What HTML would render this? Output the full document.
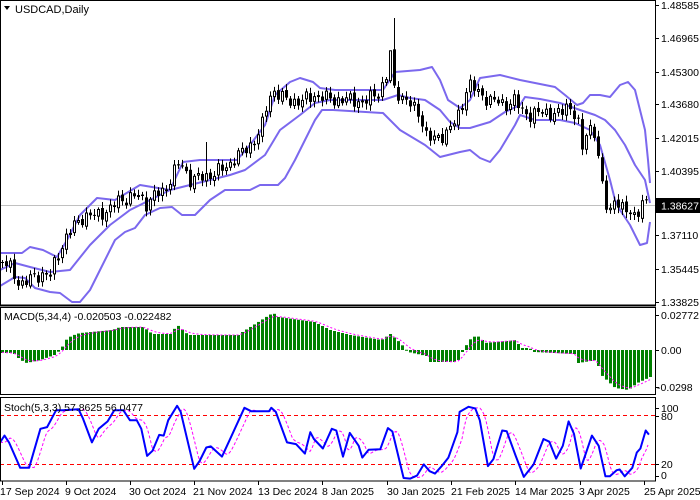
<!DOCTYPE html>
<html><head><meta charset="utf-8"><style>
html,body{margin:0;padding:0;background:#fff;}
svg{display:block;font-family:"Liberation Sans",sans-serif;}
</style></head><body>
<svg id="s" width="700" height="500" xmlns="http://www.w3.org/2000/svg">
<rect width="700" height="500" fill="#fff"/>
<line x1="0" y1="205.5" x2="655" y2="205.5" stroke="#c0c0c0"/>
<g id="bands" fill="none" stroke="#7b68ee" stroke-width="2" stroke-linejoin="round"></g>
<g id="candles"></g>
<g id="macd"></g>
<g id="stoch"></g>
<rect x="0.5" y="0.5" width="655" height="304.5" fill="none" stroke="#000"/>
<rect x="0.5" y="307.5" width="655" height="87" fill="none" stroke="#000"/>
<rect x="0.5" y="397.5" width="655" height="83.5" fill="none" stroke="#000"/>
<line x1="0" y1="306" x2="656" y2="306" stroke="#000"/>
<polygon points="4,6 10,6 7,10" fill="#000"/>
<text x="15" y="13" font-size="11" fill="#000">USDCAD,Daily</text>
<text x="4" y="320" font-size="10.5" fill="#000">MACD(5,34,4) -0.020503 -0.022482</text>
<text x="4" y="411" font-size="10.5" fill="#000">Stoch(5,3,3) 57.8625 56.0477</text>
<g font-size="10.5" fill="#000" id="axis">
<text x="661" y="9">1.48585</text>
<text x="661" y="42">1.46965</text>
<text x="661" y="76">1.45300</text>
<text x="661" y="108">1.43680</text>
<text x="661" y="142">1.42015</text>
<text x="661" y="175">1.40395</text>
<text x="661" y="239">1.37110</text>
<text x="661" y="273">1.35445</text>
<text x="661" y="306">1.33825</text>
<text x="661" y="319">0.02772</text>
<text x="661" y="354">0.00</text>
<text x="657" y="391">-0.0298</text>
<text x="661" y="412">100</text>
<text x="661" y="420">80</text>
<text x="661" y="468">20</text>
<text x="661" y="479">0</text>
</g>
<rect x="656" y="198" width="44" height="15" fill="#000"/>
<text x="661" y="209.5" font-size="10.5" fill="#fff">1.38627</text>
<g font-size="10.5" fill="#000">
<text x="0" y="495">17 Sep 2024</text>
<text x="65" y="495">9 Oct 2024</text>
<text x="129" y="495">30 Oct 2024</text>
<text x="193" y="495">21 Nov 2024</text>
<text x="258" y="495">13 Dec 2024</text>
<text x="322" y="495">8 Jan 2025</text>
<text x="387" y="495">30 Jan 2025</text>
<text x="451" y="495">21 Feb 2025</text>
<text x="515" y="495">14 Mar 2025</text>
<text x="579" y="495">3 Apr 2025</text>
<text x="644" y="495">25 Apr 2025</text>
</g>
</svg>
<script>
var NS="http://www.w3.org/2000/svg";
function el(p,t,a){var e=document.createElementNS(NS,t);for(var k in a)e.setAttribute(k,a[k]);p.appendChild(e);return e;}
function interp(K,x){if(x<=K[0][0])return K[0][1];for(var i=1;i<K.length;i++){if(x<=K[i][0]){var a=K[i-1],b=K[i];return a[1]+(b[1]-a[1])*(x-a[0])/(b[0]-a[0]);}}return K[K.length-1][1];}
function pts(K){return K.map(function(p){return p[0]+","+p[1];}).join(" ");}
var bands=document.getElementById("bands");
var U=[[0,253],[22,253],[30,247],[43,250],[57,257],[67,240],[80,215],[97,198],[115,200],[140,185],[170,190],[183,162],[200,160],[237,160],[250,145],[265,125],[275,95],[290,82],[300,78],[313,82],[320,88],[335,90],[383,90],[395,72],[420,70],[432,67],[440,80],[448,100],[460,108],[470,100],[480,78],[500,75],[520,80],[540,84],[555,87],[565,95],[577,105],[583,103],[590,95],[600,95],[610,97],[620,85],[628,82],[635,90],[640,110],[645,130],[648,160],[650,183]];
var M=[[0,270],[15,263],[30,267],[50,272],[70,270],[90,245],[110,225],[130,210],[150,200],[170,190],[190,185],[210,180],[230,175],[245,170],[265,155],[280,130],[300,115],[315,103],[330,100],[383,100],[398,95],[410,98],[425,100],[440,110],[450,122],[460,128],[470,128],[490,122],[505,112],[520,105],[525,97],[540,99],[560,103],[580,110],[595,115],[605,120],[615,130],[625,145],[635,165],[645,180],[650,203]];
var L=[[0,286],[15,277],[25,278],[35,288],[50,292],[60,293],[72,302],[80,302],[90,290],[100,270],[115,240],[125,232],[135,228],[145,215],[160,208],[172,207],[182,215],[195,215],[210,200],[225,190],[250,190],[260,185],[278,185],[285,178],[295,160],[305,140],[315,120],[322,110],[333,110],[383,113],[400,130],[425,145],[440,157],[460,152],[470,150],[480,158],[490,162],[500,150],[515,125],[520,115],[535,120],[560,120],[575,123],[590,130],[600,145],[610,180],[615,200],[620,210],[630,225],[640,245],[647,243],[650,222]];
[U,M,L].forEach(function(K){el(bands,"polyline",{points:pts(K)});});
var K=[[2,262],[10,268],[20,285],[27,282],[35,275],[50,275],[57,255],[65,240],[72,228],[80,218],[95,215],[110,210],[118,200],[130,198],[140,195],[145,205],[155,195],[165,190],[172,175],[180,162],[190,180],[200,178],[210,175],[225,168],[235,158],[245,150],[255,140],[262,125],[268,100],[272,90],[285,100],[300,102],[315,95],[325,98],[335,100],[350,100],[365,102],[380,90],[387,75],[392,40],[394,90],[400,95],[410,105],[420,115],[427,138],[435,140],[445,133],[453,125],[460,112],[465,90],[470,85],[480,95],[490,100],[505,105],[515,100],[520,110],[530,115],[545,112],[560,115],[567,105],[572,108],[578,125],[582,150],[587,130],[593,125],[597,150],[600,175],[605,205],[610,210],[615,195],[620,210],[630,212],[636,215],[641,205],[648,205]];
var cg=document.getElementById("candles");var prev=262;
for(var i=0;i<162;i++){var x=2+i*4;var c=interp(K,x)+5*Math.sin(i*2.3)+3*Math.sin(i*5.1);var o=prev+1.5*Math.sin(i*3.7);
var hi=Math.min(o,c)-2-4*Math.abs(Math.sin(i*1.7));var lo=Math.max(o,c)+2+4*Math.abs(Math.cos(i*2.9));
if(x==390)hi=58;if(x==394)hi=18;if(x==206)hi=142;
el(cg,"line",{x1:x+0.5,y1:hi,x2:x+0.5,y2:lo,stroke:"#000"});
var t=Math.min(o,c),h=Math.max(1,Math.abs(c-o));
if(c<o)el(cg,"rect",{x:x-0.5,y:t,width:2,height:h,fill:"#fff",stroke:"#000","stroke-width":1});
else el(cg,"rect",{x:x-1,y:t,width:3,height:h,fill:"#000"});
prev=c;}
var H=[[0,353],[13,353],[18,358],[25,363],[31,362],[40,360],[54,355],[60,350],[67,338],[76,334],[80,333],[112,330],[120,327],[143,327],[152,334],[170,334],[177,325],[188,335],[238,335],[242,332],[269,315],[273,313],[278,317],[314,322],[330,330],[350,335],[381,340],[390,334],[399,342],[408,352],[426,356],[430,362],[457,362],[462,352],[469,340],[475,336],[480,337],[484,343],[516,340],[520,348],[529,348],[534,352],[574,354],[578,363],[596,360],[601,375],[615,388],[628,390],[637,383],[650,377]];
var mg=document.getElementById("macd");var sig=[],s=352;
for(var i=0;i<163;i++){var x=2+i*4;var y=interp(H,x);
el(mg,"rect",{x:x-1,y:Math.min(y,350),width:3,height:Math.max(1,Math.abs(y-350)),fill:"#008000"});
s=s+(y-s)*0.4;sig.push([x,s.toFixed(1)]);}
el(mg,"polyline",{points:pts(sig),fill:"none",stroke:"#ff00ff","stroke-width":1,"stroke-dasharray":"2,2"});
var sg=document.getElementById("stoch");
el(sg,"line",{x1:0,y1:415.5,x2:655,y2:415.5,stroke:"#f00","stroke-dasharray":"4,3"});
el(sg,"line",{x1:0,y1:464.5,x2:655,y2:464.5,stroke:"#f00","stroke-dasharray":"4,3"});
var R=[[0,420],[10,400],[20,420],[45,495],[65,495],[90,380],[105,375],[125,325],[140,325],[175,322],[185,350],[205,420],[220,380],[240,358],[255,325],[275,325],[290,355],[305,355],[315,380],[328,460],[340,445],[355,398],[365,400],[375,355],[395,312],[403,330],[433,498],[445,475],[460,435],[470,432],[495,462],[515,405],[545,318],[560,328],[600,328],[605,318],[615,330],[640,420],[660,425],[680,453],[692,390],[700,410],[720,438],[740,380],[750,385],[765,462],[780,392],[800,430],[808,465],[822,442],[848,440],[865,378],[875,388],[900,525],[915,527],[930,518],[945,485],[958,505],[970,512],[985,490],[1000,465],[1020,390],[1025,330],[1045,315],[1060,320],[1070,355],[1088,490],[1100,470],[1120,385],[1130,387],[1150,460],[1168,522],[1190,485],[1212,410],[1225,418],[1240,468],[1255,430],[1268,358],[1280,395],[1295,497],[1320,400],[1335,430],[1350,520],[1360,520],[1375,502],[1382,500],[1393,520],[1410,495],[1420,450],[1428,438],[1440,385],[1447,397]];
var ST=R.map(function(p){return [+(p[0]/2.23).toFixed(1),+(300+p[1]/2.95).toFixed(1)];});
var ss=[],v=ST[0][1];
for(var x=0;x<=649;x+=2){var y=interp(ST,x-5);v=v+(y-v)*0.5;ss.push([x,v.toFixed(1)]);}
el(sg,"polyline",{points:pts(ss),fill:"none",stroke:"#ff00ff","stroke-width":1,"stroke-dasharray":"3,2"});
el(sg,"polyline",{points:pts(ST),fill:"none",stroke:"#0000ff","stroke-width":2,"stroke-linejoin":"round"});
var ax=document.getElementById("axis");
[5,38,72,104,138,171,235,269,302,315,350,387,408,416,464,476].forEach(function(y){el(ax,"line",{x1:656,y1:y+0.5,x2:659,y2:y+0.5,stroke:"#000"});});
[2,66,130,194,258,322,387,451,515,580,644].forEach(function(x){el(ax,"line",{x1:x+0.5,y1:481,x2:x+0.5,y2:485,stroke:"#000"});});
</script>
</body></html>
